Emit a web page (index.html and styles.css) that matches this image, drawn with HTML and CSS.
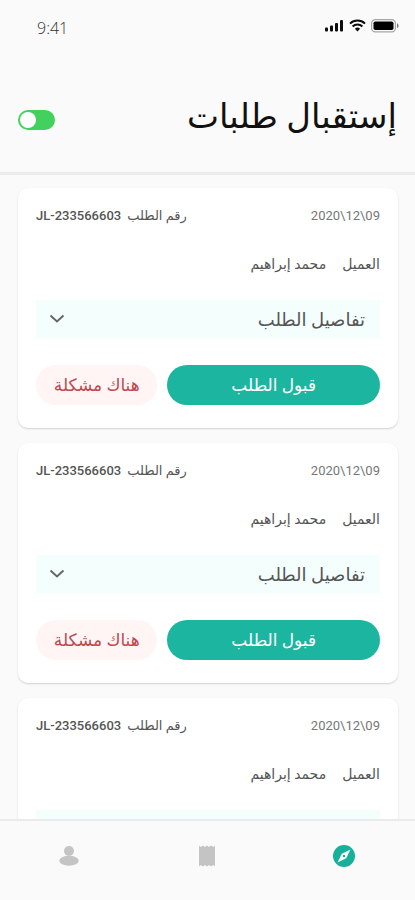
FILE: index.html
```html
<!DOCTYPE html>
<html lang="ar" dir="rtl">
<head>
<meta charset="utf-8">
<meta name="viewport" content="width=device-width, initial-scale=1">
<title>إستقبال طلبات</title>
<link rel="stylesheet" href="styles.css">
</head>
<body>
<div class="app">
  <header class="header">
    <div class="status" dir="ltr">
      <time class="clock">9:41</time>
      <svg class="status-icons" viewBox="0 0 76 16" aria-hidden="true">
        <g fill="#0c0c0c">
          <rect x="1" y="9.500" width="3" height="4" rx="1"/>
          <rect x="6" y="7.500" width="3" height="6" rx="1"/>
          <rect x="11" y="5" width="3" height="8.500" rx="1"/>
          <rect x="16" y="2" width="3" height="11.500" rx="1"/>
          <path d="M33.500 13.500l-2.600-2.700a3.800 3.800 0 0 1 5.200 0z"/>
        </g>
        <g fill="none" stroke="#0c0c0c" stroke-width="2">
          <path d="M26 5.600a10.800 10.800 0 0 1 15 0"/>
          <path d="M28.600 8.500a7 7 0 0 1 9.800 0"/>
        </g>
        <rect x="47.600" y="1.600" width="23.800" height="12.300" rx="3.600" fill="none" stroke="#a5a5a5" stroke-width="1.200"/>
        <rect x="49.500" y="3.500" width="20" height="8.500" rx="1.800" fill="#000"/>
        <path d="M73 5.300v5c2-.8 2-4.200 0-5z" fill="#777"/>
      </svg>
    </div>
    <div class="title-row">
      <h1 class="title">إستقبال طلبات</h1>
      <input class="switch" type="checkbox" checked aria-label="إستقبال طلبات">
    </div>
  </header>

  <main class="orders">
    <article class="card">
      <div class="meta">
        <time class="date" dir="ltr">2020\12\09</time>
        <p class="order"><span>رقم الطلب</span><bdi class="order-id">JL-233566603</bdi></p>
      </div>
      <p class="client"><span>العميل</span><span>محمد إبراهيم</span></p>
      <button class="details" type="button" aria-expanded="false"><span>تفاصيل الطلب</span>
        <svg class="chevron" viewBox="0 0 16 10" aria-hidden="true"><path d="M1.500 1.500L8 7.500l6.500-6"/></svg>
      </button>
      <div class="actions">
        <button class="accept" type="button">قبول الطلب</button>
        <button class="problem" type="button">هناك مشكلة</button>
      </div>
    </article>
    <article class="card">
      <div class="meta">
        <time class="date" dir="ltr">2020\12\09</time>
        <p class="order"><span>رقم الطلب</span><bdi class="order-id">JL-233566603</bdi></p>
      </div>
      <p class="client"><span>العميل</span><span>محمد إبراهيم</span></p>
      <button class="details" type="button" aria-expanded="false"><span>تفاصيل الطلب</span>
        <svg class="chevron" viewBox="0 0 16 10" aria-hidden="true"><path d="M1.500 1.500L8 7.500l6.500-6"/></svg>
      </button>
      <div class="actions">
        <button class="accept" type="button">قبول الطلب</button>
        <button class="problem" type="button">هناك مشكلة</button>
      </div>
    </article>
    <article class="card">
      <div class="meta">
        <time class="date" dir="ltr">2020\12\09</time>
        <p class="order"><span>رقم الطلب</span><bdi class="order-id">JL-233566603</bdi></p>
      </div>
      <p class="client"><span>العميل</span><span>محمد إبراهيم</span></p>
      <button class="details" type="button" aria-expanded="false" aria-label="تفاصيل الطلب">
        <svg class="chevron" viewBox="0 0 16 10" aria-hidden="true"><path d="M1.500 1.500L8 7.500l6.500-6"/></svg>
      </button>
    </article>
  </main>

  <nav class="tabs">
    <a class="tab" href="#explore" aria-current="page">
      <svg class="tab-icon" viewBox="0 0 24 24" aria-hidden="true"><circle cx="12" cy="12" r="11" fill="#17b09a"/><path d="M18.500 5.500L14.200 14.200 5.500 18.500l4.300-8.700z" fill="#fff"/><circle cx="12" cy="12" r="1.200" fill="#17b09a"/></svg>
    </a>
    <a class="tab" href="#receipts">
      <svg class="tab-icon" viewBox="0 0 24 24" aria-hidden="true"><path d="M4 1.500l1.500 1.500L8 1.500 10 3l2-1.500L14 3l2-1.500L18.500 3 20 1.500v21L18.500 21 16 22.500 14 21l-2 1.500L10 21l-2 1.500L5.500 21 4 22.500z" fill="#c4c4c4"/></svg>
    </a>
    <a class="tab" href="#profile">
      <svg class="tab-icon" viewBox="0 0 24 24" aria-hidden="true"><g fill="#c4c4c4"><circle cx="12" cy="7" r="5"/><ellipse cx="12" cy="16.800" rx="9.700" ry="5"/></g></svg>
    </a>
  </nav>
</div>
</body>
</html>
```
FILE: styles.css
```css
* { box-sizing: border-box; }

body {
  margin: 0;
  background: #fafafa;
  color: #555;
  font-family: Roboto, "DejaVu Sans", sans-serif;
}

h1, p { margin: 0; font-weight: 400; }

button { border: 0; font: inherit; cursor: pointer; }

.app {
  display: flex;
  flex-direction: column;
  height: 100vh;
}

.header {
  padding: 16px 0 24px;
  border-bottom: 3px solid #ebebeb;
}

.status {
  display: flex;
  justify-content: space-between;
  align-items: center;
  height: 24px;
  padding: 0 15px 0 37px;
}

.clock {
  font: 300 16px/24px "Open Sans", sans-serif;
  color: #333;
}

.status-icons { width: 76px; height: 16px; margin-bottom: 4px; }

.title-row {
  display: flex;
  justify-content: space-between;
  align-items: center;
  height: 60px;
  margin-top: 48px;
  padding: 0 18px;
}

.title {
  padding-bottom: 4px;
  font-size: 34px;
  line-height: 56px;
  color: #111;
}

.switch {
  appearance: none;
  width: 37px;
  height: 20px;
  margin: 4px 0 0;
  padding: 2px;
  border-radius: 10px;
  background: #ccc;
}

.switch::before {
  content: "";
  display: block;
  width: 16px;
  height: 16px;
  border-radius: 50%;
  background: #fff;
}

.switch:checked { background: #43d15d; }
.switch:checked::before { margin-right: auto; }

.orders {
  display: flex;
  flex: 1;
  flex-direction: column;
  gap: 15px;
  min-height: 0;
  padding: 13px 17px 15px 18px;
  overflow-y: auto;
  scrollbar-width: none;
}

.card {
  flex: none;
  padding: 16px 18px 23px;
  border-radius: 10px;
  background: #fff;
  box-shadow: 0 1px 2px rgba(0, 0, 0, 0.16);
}

.meta {
  display: flex;
  justify-content: space-between;
  font-size: 13px;
  line-height: 24px;
}

.order { display: flex; gap: 6px; }
.order-id { font-weight: 500; }
.date { color: #777; }

.client {
  display: flex;
  gap: 16px;
  margin-top: 24px;
  font-size: 14px;
  line-height: 24px;
}

.details {
  display: flex;
  justify-content: space-between;
  align-items: center;
  width: 100%;
  height: 38px;
  margin-top: 24px;
  padding: 0 15px 0 13px;
  background: #f4fefd;
  color: #555;
  font-size: 18px;
}

.chevron {
  width: 16px;
  height: 10px;
  margin-right: auto;
  fill: none;
  stroke: #666;
  stroke-width: 2;
}

.actions {
  display: flex;
  gap: 10px;
  margin-top: 27px;
}

.accept, .problem {
  height: 40px;
  padding: 0;
  border-radius: 20px;
  font-size: 17px;
}

.accept { flex: 7; background: #1cb5a0; color: #fff; }
.problem { flex: 4; background: #fff5f5; color: #c0484e; }

.tabs {
  display: flex;
  flex: none;
  height: 81px;
  padding-right: 2px;
  border-top: 2px solid #ebebeb;
  background: #fafafa;
}

.tab {
  display: flex;
  flex: 1;
  justify-content: center;
  padding-top: 23px;
}

.tab-icon { width: 24px; height: 24px; }
```
